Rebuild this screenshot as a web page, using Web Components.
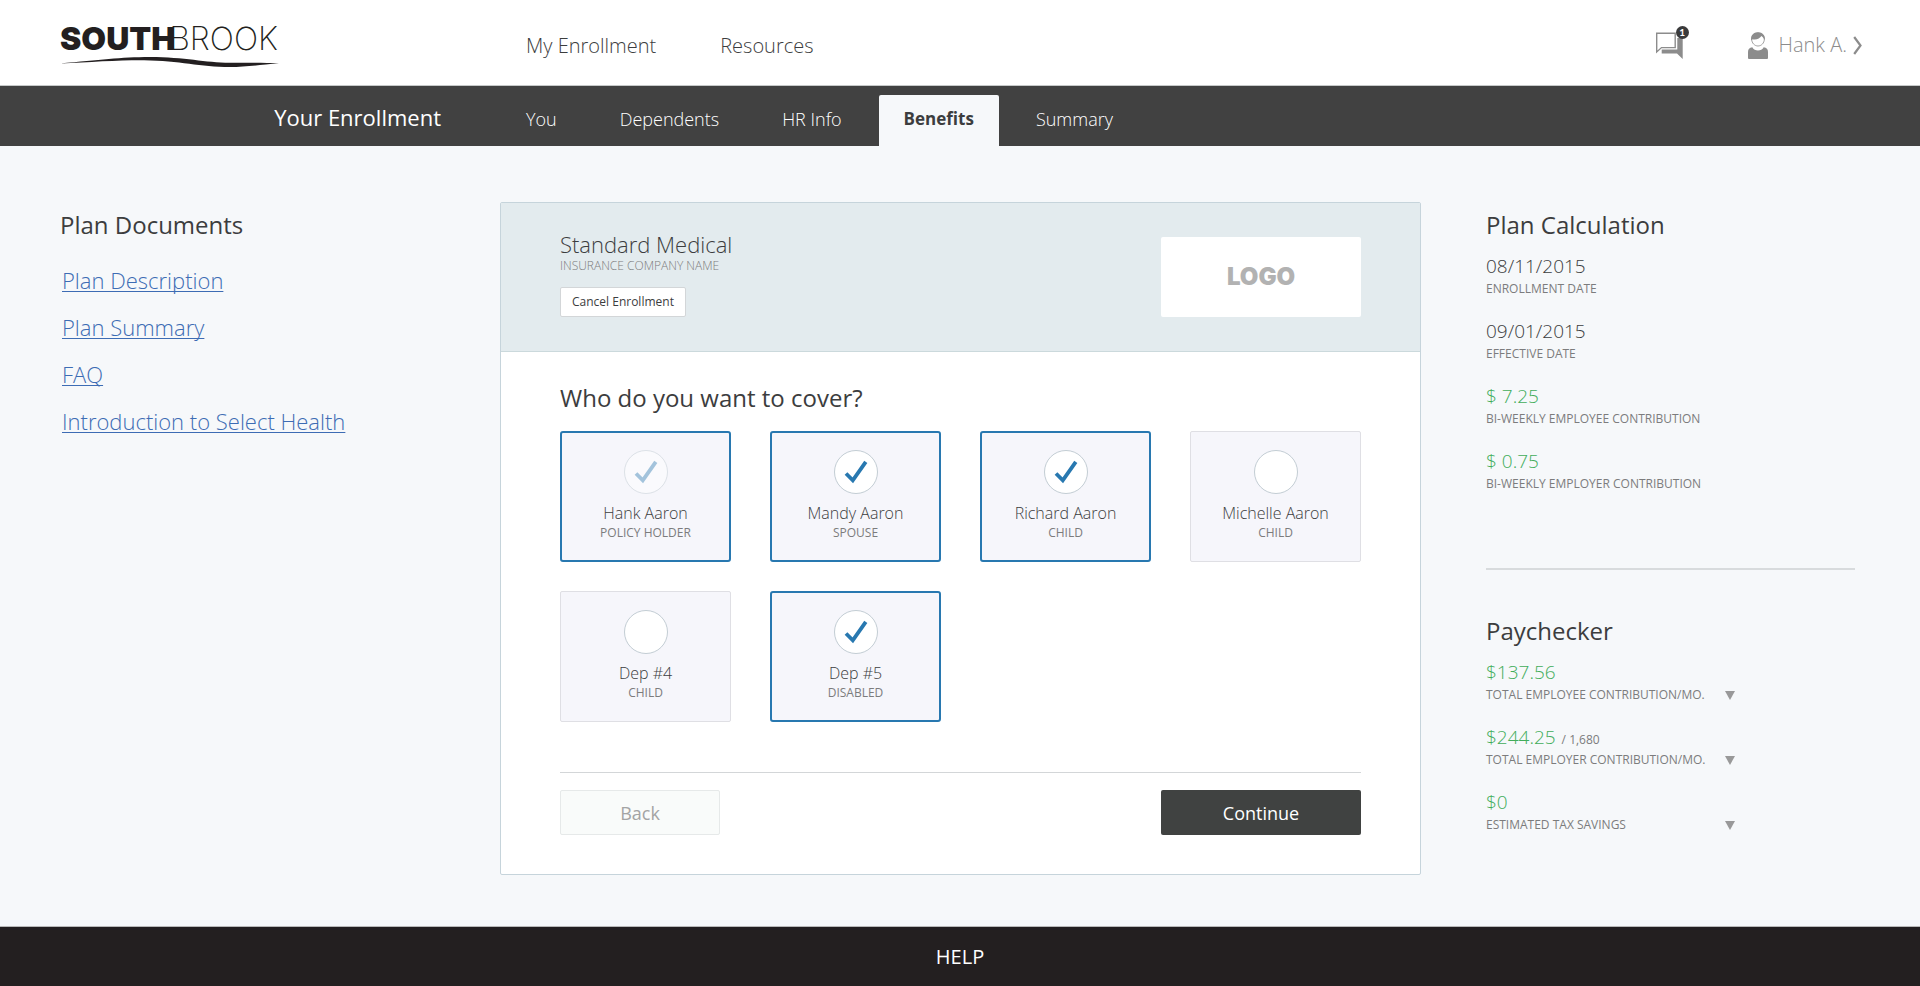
<!DOCTYPE html>
<html lang="en">
<head>
<meta charset="utf-8">
<meta name="viewport" content="width=device-width, initial-scale=1">
<title>Southbrook – Benefits</title>
<style>
  html, body { margin: 0; }
  body {
    min-height: 100vh;
    display: flex;
    flex-direction: column;
    font: 400 16px/22px "Open Sans", "Noto Sans", sans-serif;
    color: var(--ink);
    background: var(--page);
    --ink: #3c3d3e;
    --muted: #7c7c7d;
    --page: #f6f8fa;
    --bar: #414141;
    --rule: #d3d6d8;
    --blue: #2878b0;
    --green: #42ad5b;
    --columns: minmax(0, 440fr) minmax(0, 921fr) minmax(0, 434fr);
  }
  sb-workspace { flex: 1; }
</style>
</head>
<body>
<sb-header></sb-header>
<sb-steps></sb-steps>

<sb-workspace>
  <sb-documents slot="left" heading="Plan Documents">
    <a href="#description">Plan Description</a>
    <a href="#summary">Plan Summary</a>
    <a href="#faq">FAQ</a>
    <a href="#introduction">Introduction to Select Health</a>
  </sb-documents>

  <sb-plan>
    <span slot="name">Standard Medical</span>
    <span slot="company">INSURANCE COMPANY NAME</span>
    <span slot="question">Who do you want to cover?</span>
    <sb-person name="Hank Aaron" role-name="POLICY HOLDER" checked disabled></sb-person>
    <sb-person name="Mandy Aaron" role-name="SPOUSE" checked></sb-person>
    <sb-person name="Richard Aaron" role-name="CHILD" checked></sb-person>
    <sb-person name="Michelle Aaron" role-name="CHILD"></sb-person>
    <sb-person name="Dep #4" role-name="CHILD"></sb-person>
    <sb-person name="Dep #5" role-name="DISABLED" checked></sb-person>
  </sb-plan>

  <sb-figures slot="right" heading="Plan Calculation">
    <sb-figure value="08/11/2015" caption="ENROLLMENT DATE"></sb-figure>
    <sb-figure value="09/01/2015" caption="EFFECTIVE DATE"></sb-figure>
    <sb-figure money value="$ 7.25" caption="BI-WEEKLY EMPLOYEE CONTRIBUTION"></sb-figure>
    <sb-figure money value="$ 0.75" caption="BI-WEEKLY EMPLOYER CONTRIBUTION"></sb-figure>
  </sb-figures>
  <sb-figures slot="right" heading="Paychecker">
    <sb-figure money expandable value="$137.56" caption="TOTAL EMPLOYEE CONTRIBUTION/MO."></sb-figure>
    <sb-figure money expandable value="$244.25" limit="/ 1,680" caption="TOTAL EMPLOYER CONTRIBUTION/MO."></sb-figure>
    <sb-figure money expandable value="$0" caption="ESTIMATED TAX SAVINGS"></sb-figure>
  </sb-figures>
</sb-workspace>

<sb-footer><a href="#help">HELP</a></sb-footer>

<script>
const base = '<style>*{box-sizing:border-box}h1,h2,p{margin:0;font-weight:400}a{color:inherit;text-decoration:none}button{font:inherit;color:inherit;margin:0;cursor:pointer}svg{display:block}</style>';

const define = (name, markup, setup) => {
  customElements.define(name, class extends HTMLElement {
    constructor() {
      super();
      const template = document.createElement('template');
      template.innerHTML = base + markup;
      this.attachShadow({ mode: 'open' }).append(template.content.cloneNode(true));
    }
    connectedCallback() {
      if (setup) setup(this, (selector) => this.shadowRoot.querySelector(selector));
    }
  });
};

define('sb-logo', `
<style>
  :host { display: block; }
  a { display: flex; flex-direction: column; gap: 2px; width: 219px; color: #231f20; }
  .word { display: flex; font: 200 32px/32px Inter, sans-serif; }
  b { font-weight: 900; }
  span { margin-left: -6px; }
</style>
<a href="#home">
  <div class="word"><b>SOUTH</b><span>BROOK</span></div>
  <svg width="219" height="11" viewBox="0 0 219 11" aria-hidden="true"><path fill="#231f20" d="M0 6.500C40 3 60 0 90 0c35 0 55 5.700 80 5.700 20 0 35 0 49 .600C200 8 185 10 170 10c-30 0-50-6.500-86-6.800C60 3 30 5 0 6.500Z"/></svg>
</a>`);

define('sb-header', `
<style>
  :host { display: block; background: #fff; border-bottom: 1px solid #c6c9c9; }
  header { height: 85px; padding: 5px 65px 0 60px; display: grid; grid-template-columns: var(--columns); align-items: center; }
  nav { display: flex; gap: 12px; padding-top: 2px; font-size: 20px; line-height: 28px; font-weight: 300; }
  nav a { padding: 0 26px; }
  .tools { display: flex; justify-content: flex-end; align-items: center; gap: 57px; margin-right: -7px; color: #8c8c8c; }
  .chat { position: relative; display: block; width: 36px; height: 40px; }
  .badge { position: absolute; left: 21px; top: 1px; width: 13px; height: 13px; border-radius: 50%; background: #3a3a3b; color: #fff; font: 700 10px/13px Lato, sans-serif; text-align: center; }
  .account { display: flex; align-items: center; font-size: 20px; line-height: 28px; font-weight: 300; }
  .account span { margin: 0 6px 0 11px; }
</style>
<header>
  <sb-logo></sb-logo>
  <nav aria-label="Site"><a href="#enrollment">My Enrollment</a><a href="#resources">Resources</a></nav>
  <div class="tools">
    <a class="chat" href="#messages">
      <svg width="36" height="40" viewBox="0 0 36 40" aria-hidden="true">
        <path fill="none" stroke="#8c8c8c" stroke-width="1.4" d="M1.7 8.2H20.2V22.6H6.5L1.7 27Z"/>
        <path fill="#8c8c8c" d="M22.3 13H27.7V34L22 28.4H6.7V24.4H22.3Z"/>
      </svg>
      <span class="badge">1</span>
    </a>
    <a class="account" href="#account">
      <svg width="20" height="28" viewBox="0 0 20 28" aria-hidden="true">
        <path fill="#8c8c8c" d="M0 27V21Q0 16.600 4.300 16.200C6.500 20.600 13.500 20.600 15.700 16.200Q20 16.600 20 21V27Q20 28 19 28H1Q0 28 0 27Z"/>
        <path fill="#fff" stroke="#8c8c8c" stroke-width=".8" d="M3.700 8.200C3.700 4.200 6.400 2 10 2S16.300 4.200 16.300 8.200 13.200 15 10 15 3.700 12.200 3.700 8.200Z"/>
        <path fill="#8c8c8c" d="M3.200 9.500C2.500 4.300 5.500 1.300 10 1.300S17.500 4.300 16.800 9.500C16.200 8 15.300 6.400 13.400 5 12 7.200 8.500 9.300 4.500 8.300Z"/>
      </svg>
      <span>Hank A.</span>
      <svg width="9" height="20" viewBox="0 0 9 20" aria-hidden="true"><path fill="none" stroke="#8c8c8c" stroke-width="2.200" d="M1.200 2 7.500 10.500 1.200 19"/></svg>
    </a>
  </div>
</header>`);

define('sb-steps', `
<style>
  :host { display: block; background: var(--bar); color: #fff; }
  .bar { height: 60px; padding: 0 65px 0 60px; display: grid; grid-template-columns: var(--columns); align-items: end; }
  h1 { padding: 0 59px 6px 0; text-align: right; font-size: 22px; line-height: 45px; white-space: nowrap; }
  nav { grid-column: 2 / 4; display: flex; gap: 11px; font-size: 18px; line-height: 48px; font-weight: 300; }
  nav a { padding: 0 26px 3px; }
  nav a[aria-current] { padding: 0 25px 3px; background: var(--page); color: var(--ink); font-size: 17px; font-weight: 700; border-radius: 2px 2px 0 0; }
</style>
<div class="bar">
  <h1>Your Enrollment</h1>
  <nav aria-label="Enrollment steps">
    <a href="#you">You</a><a href="#dependents">Dependents</a><a href="#hr">HR Info</a><a href="#benefits" aria-current="step">Benefits</a><a href="#review">Summary</a>
  </nav>
</div>`);

define('sb-workspace', `
<style>
  :host { display: block; }
  main { padding: 56px 65px 51px 60px; display: grid; grid-template-columns: var(--columns); align-items: start; }
  aside { padding-top: 7px; }
  .right { padding-left: 65px; display: grid; }
</style>
<main>
  <aside><slot name="left"></slot></aside>
  <slot></slot>
  <aside class="right"><slot name="right"></slot></aside>
</main>`);

define('sb-documents', `
<style>
  :host { display: block; }
  h2 { font-size: 24px; line-height: 32px; margin-bottom: 16px; }
  nav { display: flex; flex-direction: column; align-items: flex-start; padding-left: 2px; font-size: 22px; line-height: 47px; font-weight: 300; }
  ::slotted(a) { color: #3d6cb4; text-decoration: underline; text-decoration-thickness: 1px; text-underline-offset: 2px; text-decoration-skip-ink: none; }
</style>
<h2></h2>
<nav aria-label="Plan documents"><slot></slot></nav>`,
(el, $) => { $('h2').textContent = el.getAttribute('heading'); });

define('sb-plan', `
<style>
  :host { display: block; background: #fff; border: 1px solid #c6d4db; border-radius: 2px; }
  header { display: flex; justify-content: space-between; align-items: flex-end; padding: 27px 59px 34px; background: #e3ebee; border-bottom: 1px solid #cbd9dc; }
  .name { font-size: 22px; line-height: 28px; font-weight: 300; }
  .company { font-size: 12px; line-height: 16px; font-weight: 300; color: var(--muted); margin-bottom: 13px; }
  .cancel { display: block; height: 30px; padding: 0 11px; font-size: 12px; background: #fff; border: 1px solid #d3d6d8; border-radius: 2px; }
  .logo { width: 200px; height: 80px; display: grid; place-items: center; background: #fff; border-radius: 2px; color: #b2b2b2; font: 900 24px/32px Inter, sans-serif; }
  form { padding: 30px 59px 39px; }
  h2 { font-size: 24px; line-height: 32px; margin-bottom: 17px; }
  .people { display: grid; grid-template-columns: repeat(4, minmax(0, 1fr)); gap: 29px 39px; }
  .actions { display: flex; justify-content: space-between; margin-top: 50px; padding-top: 17px; border-top: 1px solid var(--rule); }
  .actions button { height: 45px; border-radius: 2px; font-size: 18px; }
  .back { width: 160px; background: #f9fbfa; border: 1px solid #e6e9e9; color: #a3a4a4; }
  .next { width: 200px; background: #404241; border: 0; color: #fff; }
</style>
<header>
  <div>
    <h1 class="name"><slot name="name"></slot></h1>
    <p class="company"><slot name="company"></slot></p>
    <button class="cancel" type="button">Cancel Enrollment</button>
  </div>
  <div class="logo">LOGO</div>
</header>
<form>
  <h2><slot name="question"></slot></h2>
  <div class="people"><slot></slot></div>
  <div class="actions"><button class="back" type="button">Back</button><button class="next" type="button">Continue</button></div>
</form>`);

define('sb-person', `
<style>
  :host { display: block; }
  label { display: grid; justify-items: center; align-content: start; height: 131px; padding-top: 18px; border: 1px solid #dfdfe4; border-radius: 2px; background: #f6f6fb; cursor: pointer; }
  label:has(:checked) { padding-top: 17px; border: 2px solid var(--blue); border-radius: 3px; }
  .tick { display: grid; width: 44px; height: 44px; margin-bottom: 8px; }
  .tick > * { grid-area: 1 / 1; }
  input { appearance: none; width: 44px; height: 44px; margin: 0; border: 1px solid #c3cdd4; border-radius: 50%; background: #fff; }
  svg { visibility: hidden; pointer-events: none; }
  input:checked + svg { visibility: visible; }
  .tick:has(:disabled) { opacity: .5; }
  .tick:has(:disabled) svg { opacity: .8; }
  .name { font-size: 16px; line-height: 22px; font-weight: 300; }
  .role { font-size: 12px; line-height: 18px; color: var(--muted); }
</style>
<label>
  <span class="tick">
    <input type="checkbox">
    <svg width="44" height="44" viewBox="0 0 44 44" aria-hidden="true"><path fill="none" stroke="#2878b0" stroke-width="3.800" d="M12 23.500 18.800 30.300 31.800 11.800"/></svg>
  </span>
  <span class="name"></span>
  <span class="role"></span>
</label>`,
(el, $) => {
  $('.name').textContent = el.getAttribute('name');
  $('.role').textContent = el.getAttribute('role-name');
  $('input').checked = el.hasAttribute('checked');
  $('input').disabled = el.hasAttribute('disabled');
});

define('sb-figures', `
<style>
  :host { display: block; }
  :host(:not(:first-of-type)) { margin-top: 74px; padding-top: 45px; border-top: 2px solid #d8dbdd; }
  h2 { font-size: 24px; line-height: 32px; margin-bottom: 12px; }
  .list { display: grid; gap: 19px; }
</style>
<h2></h2>
<div class="list"><slot></slot></div>`,
(el, $) => { $('h2').textContent = el.getAttribute('heading'); });

define('sb-figure', `
<style>
  :host { display: block; max-width: 249px; }
  .value { display: flex; align-items: baseline; height: 26px; font-size: 19px; line-height: 26px; font-weight: 300; }
  :host([money]) .value { color: var(--green); }
  .limit { margin-left: 6px; font-size: 12px; line-height: 20px; font-weight: 400; color: var(--muted); }
  .caption { display: flex; justify-content: space-between; align-items: center; font-size: 12px; line-height: 20px; color: var(--muted); white-space: nowrap; }
  button { padding: 0; border: 0; background: none; }
  :host(:not([expandable])) button, :host(:not([limit])) .limit { display: none; }
</style>
<div class="value"><span class="amount"></span><span class="limit"></span></div>
<div class="caption"><span class="text"></span><button type="button" aria-label="Show details"><svg width="10" height="9" viewBox="0 0 10 9" aria-hidden="true"><path fill="#999" d="M0 0H10L5 9Z"/></svg></button></div>`,
(el, $) => {
  $('.amount').textContent = el.getAttribute('value');
  $('.limit').textContent = el.getAttribute('limit') || '';
  $('.text').textContent = el.getAttribute('caption');
});

define('sb-footer', `
<style>
  :host { display: block; background: #231f20; color: #fff; border-top: 1px solid #b9b9b9; }
  footer { height: 59px; display: grid; place-items: center; font-size: 20px; line-height: 28px; }
  ::slotted(a) { color: inherit; text-decoration: none; }
</style>
<footer><slot></slot></footer>`);
</script>
</body>
</html>
